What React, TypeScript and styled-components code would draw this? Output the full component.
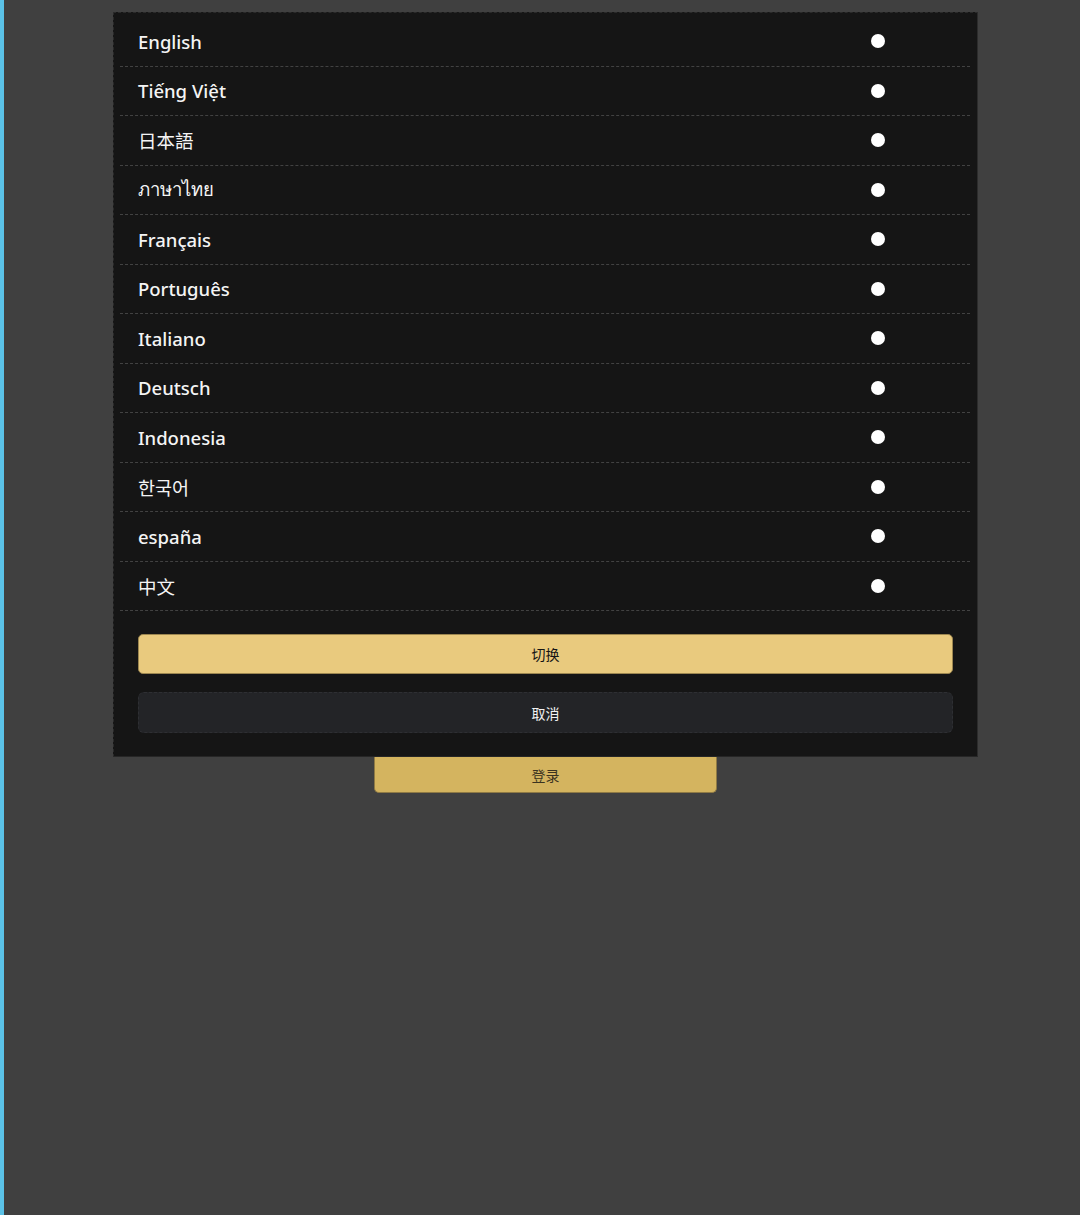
import styled, { createGlobalStyle } from "styled-components";

const GlobalStyle = createGlobalStyle`
    html, body {
        margin: 0;
        padding: 0;
        background: #404040;
    }
    * {
        box-sizing: border-box;
    }
`;

const Page = styled.div`
    display: flex;
    min-height: 1215px;
    background: #404040;
    font-family: "Noto Sans", "Noto Sans CJK SC", sans-serif;
`;

const SideStripe = styled.div`
    width: 4px;
    flex-shrink: 0;
    background: #5bc2e7;
`;

const Main = styled.div`
    display: flex;
    flex-direction: column;
    align-items: center;
    width: 865px;
    margin-left: 109px;
    padding-top: 12px;
`;

const Modal = styled.div`
    width: 865px;
    display: flex;
    flex-direction: column;
    padding: 4px 7px 23px 6px;
    background: #151515;
    border: 1px dashed #2a2a2a;
    border-right: 1px solid #2c2c2c;
    border-bottom: 1px solid #262626;
`;

const List = styled.ul`
    list-style: none;
    margin: 0;
    padding: 0;
`;

const Row = styled.li`
    display: flex;
    align-items: center;
    justify-content: space-between;
    height: 49.5px;
    padding: 0 85px 0 18px;
    border-bottom: 1px dashed #424242;
    color: #f4f4f4;
    font-size: 18.5px;
`;

const Label = styled.span<{ $light?: boolean }>`
    font-weight: ${(p) => (p.$light ? 400 : 500)};
`;

const Radio = styled.span`
    width: 14px;
    height: 14px;
    border-radius: 50%;
    background: #ffffff;
`;

const Actions = styled.div`
    display: flex;
    flex-direction: column;
    gap: 18px;
    padding: 23px 17px 0 18px;
`;

const Button = styled.button<{ $primary?: boolean }>`
    height: ${(p) => (p.$primary ? "40px" : "41px")};
    width: 100%;
    border-radius: ${(p) => (p.$primary ? "5px" : "6px")};
    border: 1px ${(p) => (p.$primary ? "solid #9c8650" : "dashed #2e2f33")};
    background: ${(p) => (p.$primary ? "#e9ca7e" : "#232427")};
    color: ${(p) => (p.$primary ? "#151515" : "#f2f2f2")};
    font-family: "Noto Sans CJK SC", sans-serif;
    font-size: 14px;
    cursor: pointer;
`;

const LoginButton = styled.button`
    width: 343px;
    height: 36px;
    border: 1px solid #8f7a45;
    border-top: none;
    border-radius: 0 0 5px 5px;
    background: #d4b45f;
    color: #3a3320;
    font-family: "Noto Sans CJK SC", sans-serif;
    font-size: 14px;
`;

const languages = [
    { name: "English" },
    { name: "Tiếng Việt" },
    { name: "日本語", light: true },
    { name: "ภาษาไทย", light: true },
    { name: "Français" },
    { name: "Português" },
    { name: "Italiano" },
    { name: "Deutsch" },
    { name: "Indonesia" },
    { name: "한국어", light: true },
    { name: "españa" },
    { name: "中文", light: true },
];

export default function App() {
    return (
        <Page>
            <GlobalStyle />
            <SideStripe />
            <Main>
                <Modal>
                    <List>
                        {languages.map((lang) => (
                            <Row key={lang.name}>
                                <Label $light={lang.light}>{lang.name}</Label>
                                <Radio />
                            </Row>
                        ))}
                    </List>
                    <Actions>
                        <Button $primary>切换</Button>
                        <Button>取消</Button>
                    </Actions>
                </Modal>
                <LoginButton>登录</LoginButton>
            </Main>
        </Page>
    );
}
